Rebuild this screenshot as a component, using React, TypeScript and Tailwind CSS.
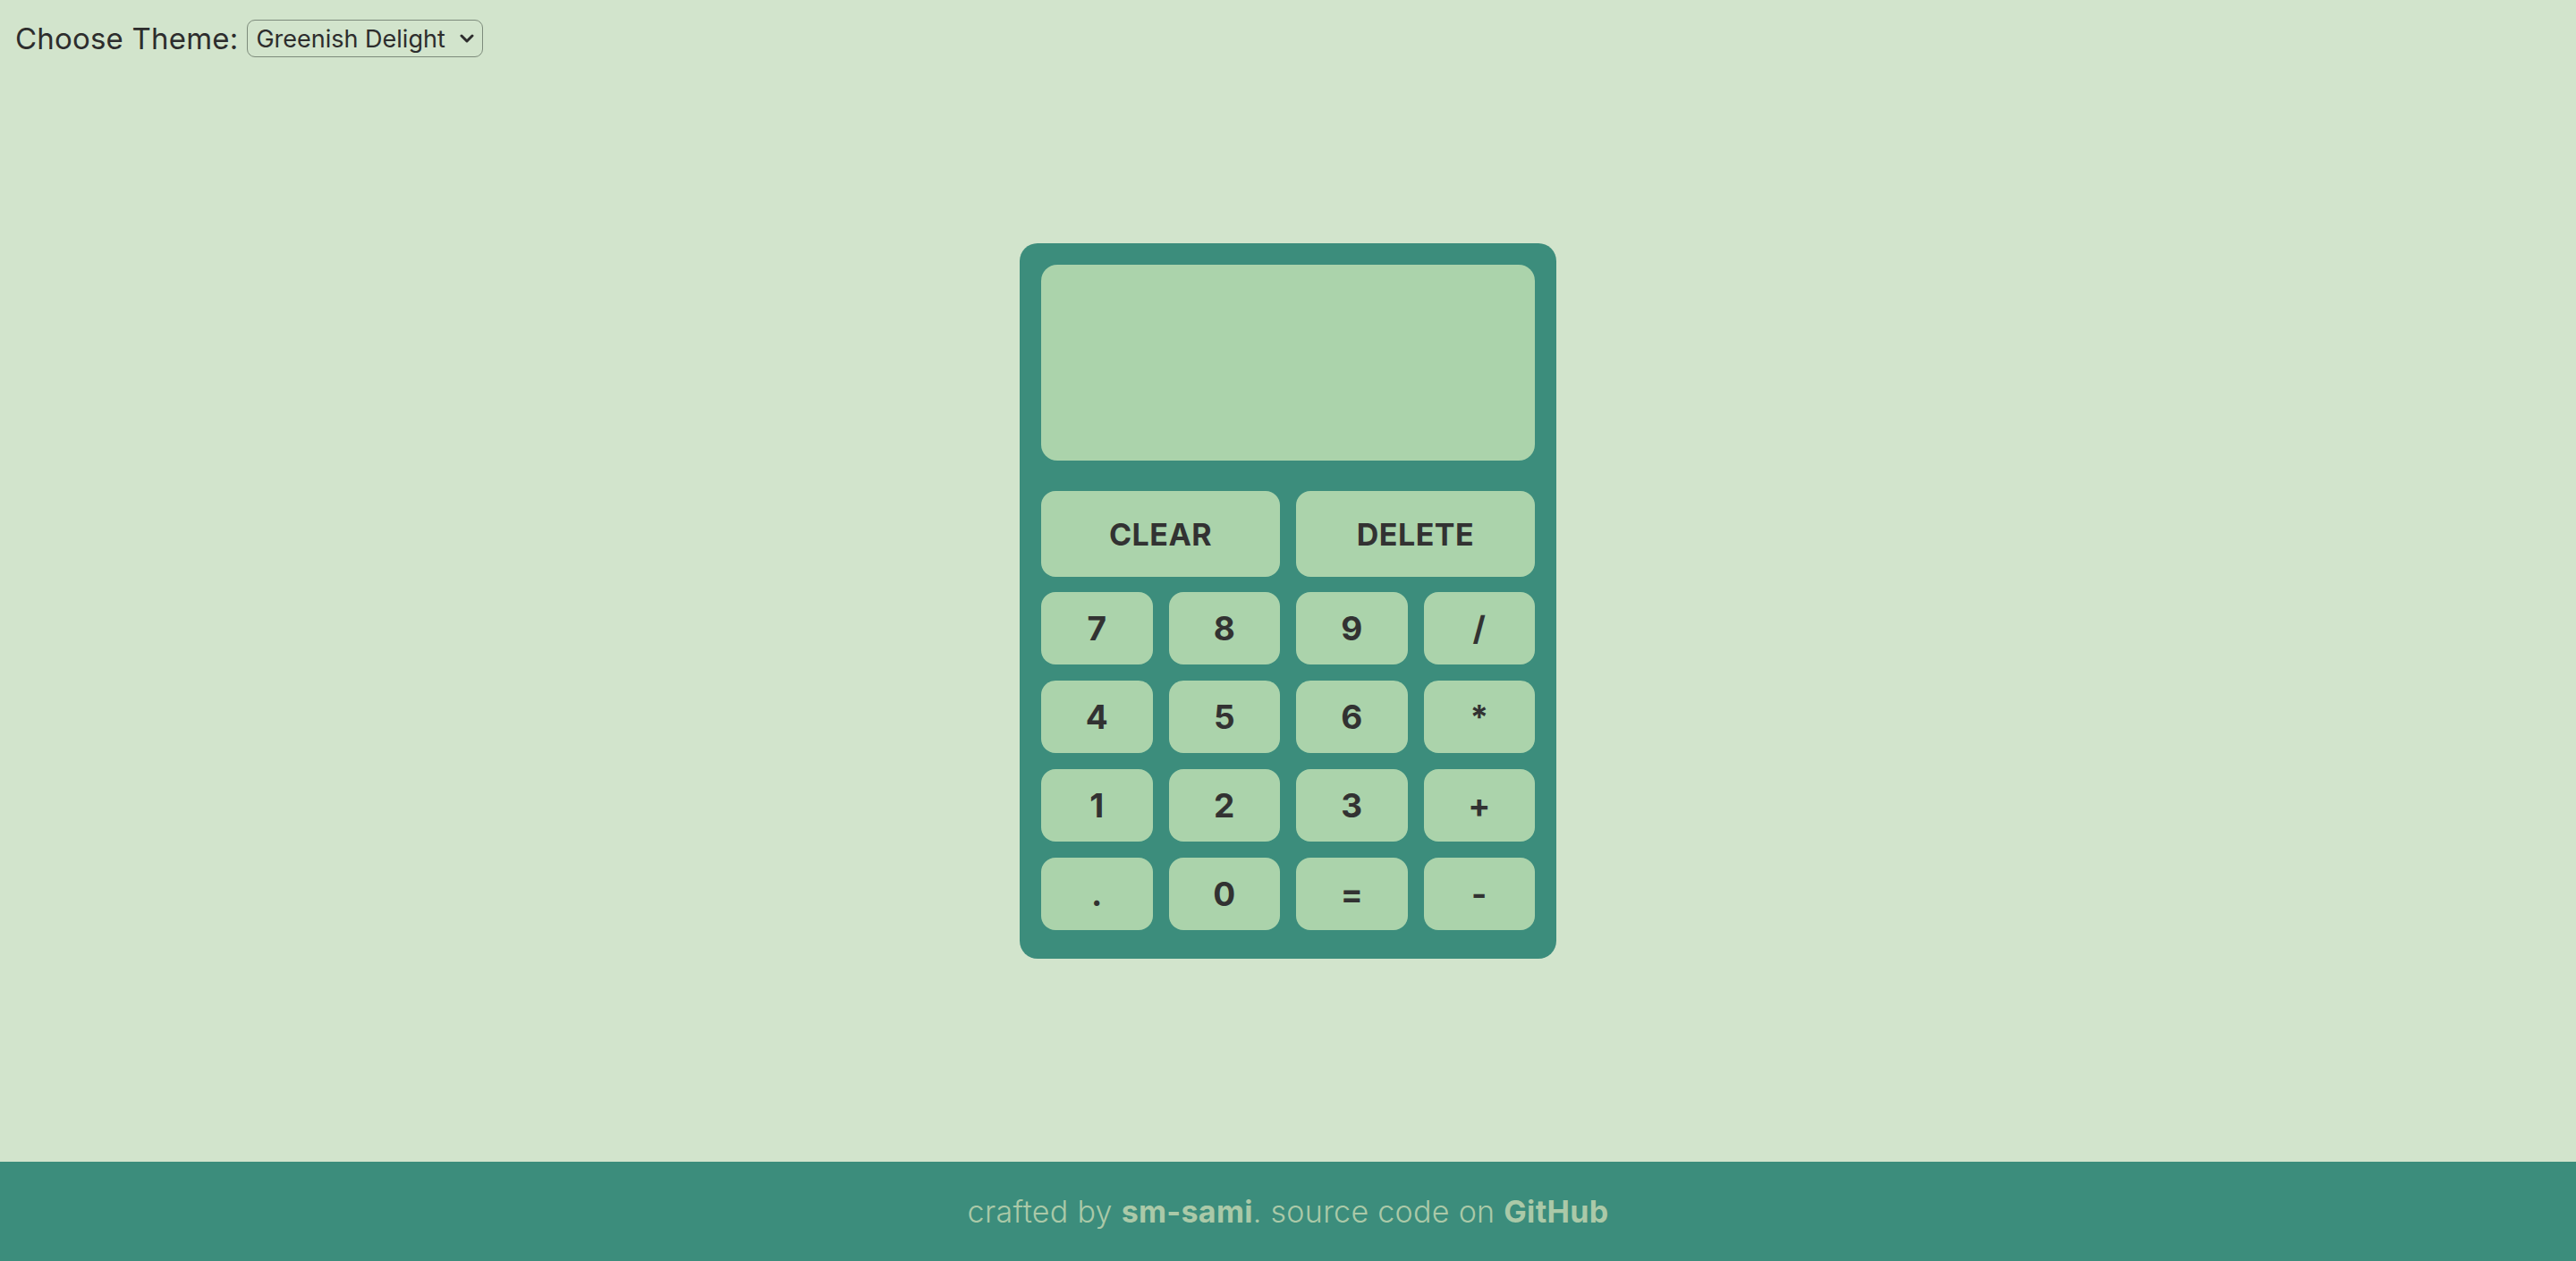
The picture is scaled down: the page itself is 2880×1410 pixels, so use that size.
import { FC } from 'react';

const font = { fontFamily: 'Inter, "Noto Sans", sans-serif' };

const rows = [
  ['7', '8', '9', '/'],
  ['4', '5', '6', '*'],
  ['1', '2', '3', '+'],
  ['.', '0', '=', '-'],
];

const Key: FC<{ label: string; wide?: boolean }> = ({ label, wide }) => (
  <button
    className={
      wide
        ? 'h-[96px] rounded-[16px] bg-[#abd3ab] text-[34px] font-bold text-[#323232] tracking-[0.5px]'
        : 'h-[81px] rounded-[16px] bg-[#abd3ab] text-[37px] font-bold text-[#323232]'
    }
  >
    {label}
  </button>
);

export default function App() {
  return (
    <div className="min-h-screen flex flex-col bg-[#d2e4cc] text-[#2d2d2d]" style={font}>
      <div className="flex items-center gap-[10px] pl-[17px] pt-[22px]">
        <span className="text-[33px] leading-none tracking-[0.2px]">Choose Theme:</span>
        <div className="flex items-center justify-between w-[264px] h-[42px] pl-[9px] pr-[9px] rounded-[9px] border-[1.5px] border-[#7d8b7b]">
          <span className="text-[27px] leading-none">Greenish Delight</span>
          <svg width="16" height="10" viewBox="0 0 16 10" fill="none">
            <path d="M2 2l6 6 6-6" stroke="#2d2d2d" strokeWidth="3" strokeLinecap="round" strokeLinejoin="round" />
          </svg>
        </div>
      </div>

      <div className="flex-1 flex items-center justify-center pb-[19px]">
        <div className="w-[600px] rounded-[20px] bg-[#3c8d7c] px-[24px] pt-[24px] pb-[32px]">
          <div className="h-[219px] rounded-[18px] bg-[#abd3ab]" />
          <div className="mt-[34px] grid grid-cols-2 gap-[18px]">
            <Key label="CLEAR" wide />
            <Key label="DELETE" wide />
          </div>
          <div className="mt-[17px] grid grid-cols-4 gap-[18px]">
            {rows.flat().map((k) => (
              <Key key={k} label={k} />
            ))}
          </div>
        </div>
      </div>

      <footer className="h-[111px] flex items-center justify-center bg-[#3c8d7c] text-[#abc9a8] text-[34px] font-light tracking-[0.3px]">
        <span>
          crafted by <b className="font-bold">sm-sami</b>. source code on <b className="font-bold">GitHub</b>
        </span>
      </footer>
    </div>
  );
}
